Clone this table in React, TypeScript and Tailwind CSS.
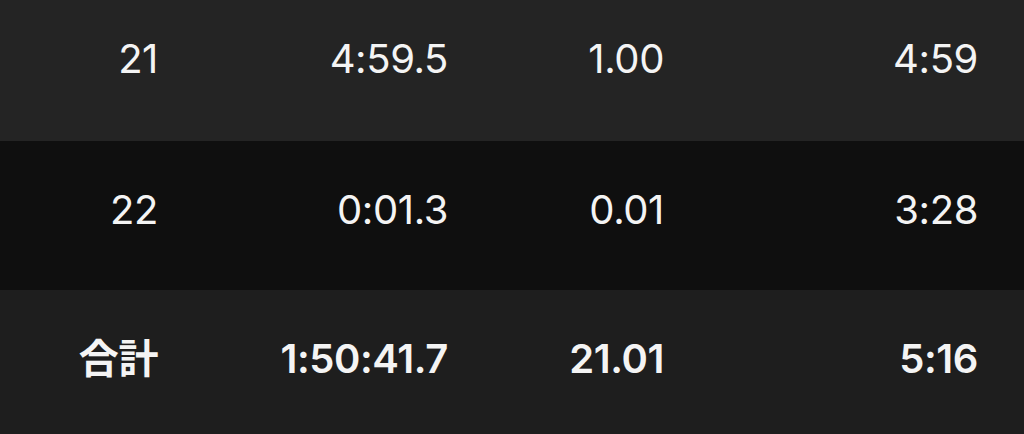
import React from "react";

interface SplitRow {
  lap: string;
  time: string;
  distance: string;
  pace: string;
}

const rows: SplitRow[] = [
  { lap: "21", time: "4:59.5", distance: "1.00", pace: "4:59" },
  { lap: "22", time: "0:01.3", distance: "0.01", pace: "3:28" },
];

const total: SplitRow = { lap: "合計", time: "1:50:41.7", distance: "21.01", pace: "5:16" };

const font = {
  fontFamily: '"Inter", "Noto Sans CJK JP", sans-serif',
};

function Cells({ row }: { row: SplitRow }) {
  return (
    <div className="grid w-full grid-cols-[158px_290px_216px_314px] text-right">
      <span>{row.lap}</span>
      <span>{row.time}</span>
      <span>{row.distance}</span>
      <span>{row.pace}</span>
    </div>
  );
}

export default function App() {
  return (
    <div
      className="w-[1024px] h-[434px] overflow-hidden bg-[#1e1e1e] text-[#f4f4f4] text-[40px] leading-none tracking-[-0.01em]"
      style={font}
    >
      {/* Lap 21 */}
      <div className="flex h-[141px] items-center bg-[#242424] pb-[23px]">
        <Cells row={rows[0]} />
      </div>

      {/* Lap 22 */}
      <div className="flex h-[149px] items-center bg-[#0f0f0f] pb-[11px]">
        <Cells row={rows[1]} />
      </div>

      {/* Total */}
      <div className="flex h-[144px] items-center bg-[#1e1e1e] pb-[6px] font-semibold">
        <Cells row={total} />
      </div>
    </div>
  );
}
